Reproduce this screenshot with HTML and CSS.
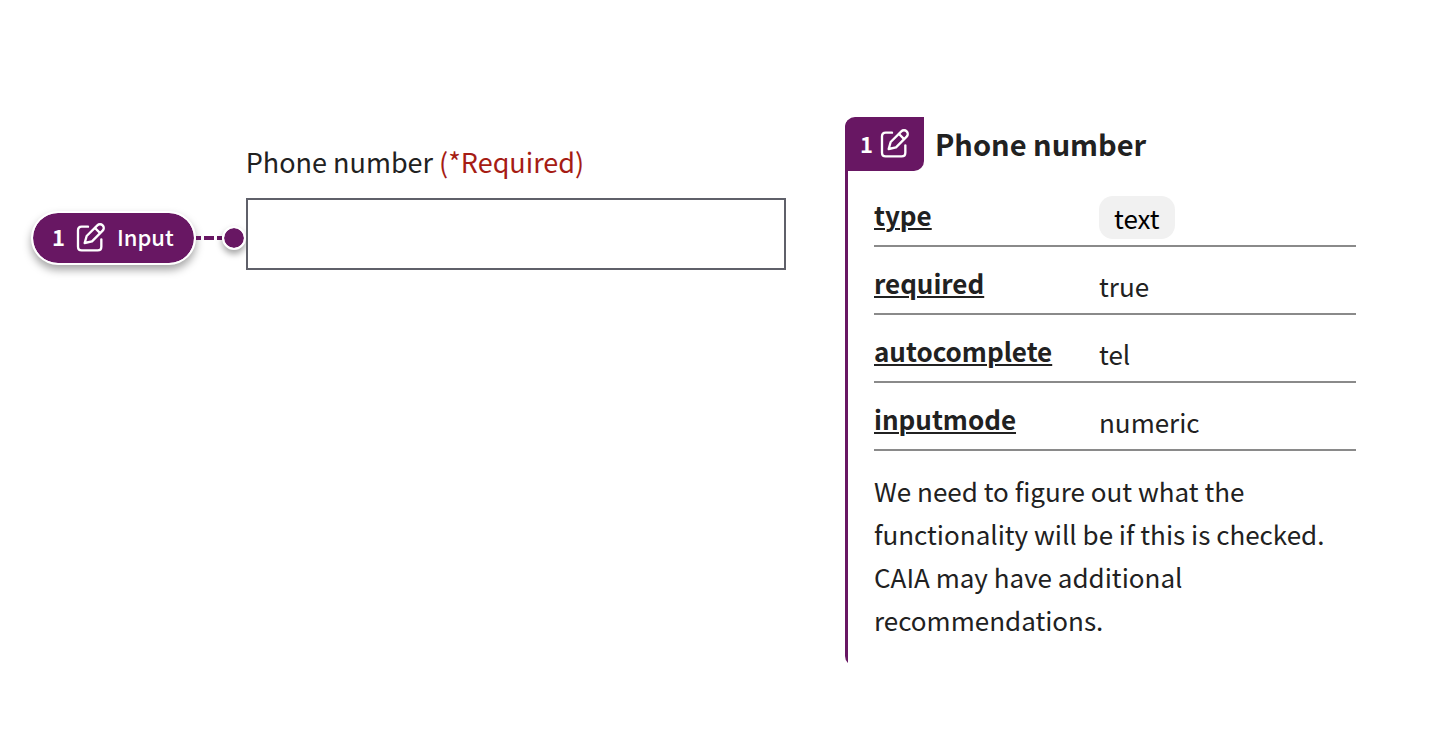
FILE: index.html
```html
<!DOCTYPE html>
<html lang="en">
<head>
<meta charset="utf-8">
<meta name="viewport" content="width=device-width, initial-scale=1">
<title>Phone number input annotation</title>
<link rel="stylesheet" href="styles.css">
</head>
<body>
<svg class="symbols" aria-hidden="true">
  <symbol id="edit" viewBox="0 0 90 90">
    <g fill="none" stroke="currentColor" stroke-width="7" stroke-linecap="round" stroke-linejoin="round">
      <path d="M36 14H17Q6 14 6 25V74Q6 85 17 85H65Q76 85 76 74V52"/>
      <path d="M26 63L32 42L64 10A11 11 0 0 1 80 26L48 58Z"/>
      <path d="M57 18L71 32"/>
    </g>
  </symbol>
</svg>
<main class="page">
  <form class="field">
    <label class="field-label" for="phone">Phone number <span class="required">(*Required)</span></label>
    <div class="marker">
      <div class="pill"><span class="number">1</span><svg class="icon" aria-hidden="true"><use href="#edit"/></svg><span>Input</span></div>
      <span class="line"></span>
      <span class="dot"></span>
    </div>
    <input class="field-input" id="phone" type="text" inputmode="numeric" autocomplete="tel" required>
  </form>
  <section class="note">
    <header class="note-header">
      <div class="tag"><span class="number">1</span><svg class="icon" aria-hidden="true"><use href="#edit"/></svg></div>
      <h2 class="note-title">Phone number</h2>
    </header>
    <div class="note-body">
      <table class="attributes">
        <tr><th scope="row"><a href="#type">type</a></th><td><code class="chip">text</code></td></tr>
        <tr><th scope="row"><a href="#required">required</a></th><td>true</td></tr>
        <tr><th scope="row"><a href="#autocomplete">autocomplete</a></th><td>tel</td></tr>
        <tr><th scope="row"><a href="#inputmode">inputmode</a></th><td>numeric</td></tr>
      </table>
      <p class="remark">We need to figure out what the functionality will be if this is checked. CAIA may have additional recommendations.</p>
    </div>
  </section>
</main>
</body>
</html>
```
FILE: styles.css
```css
* { box-sizing: border-box; }

body {
  margin: 0;
  background: #fff;
  color: #212121;
  font-family: "Noto Sans CJK SC", "Noto Sans", sans-serif;
  font-size: 26px;
  line-height: 43px;
}

.symbols { position: absolute; width: 0; height: 0; }

.icon { width: 30px; height: 30px; flex: none; }

.number { font-weight: 700; }

.page {
  display: grid;
  grid-template-columns: 755fr 511fr;
  align-items: start;
  gap: 59px;
  padding: 117px 92px 72px 31px;
}

.field {
  display: grid;
  grid-template-columns: auto 1fr;
  align-items: center;
  row-gap: 15px;
  padding-top: 23px;
}

.field-label { grid-column: 2; font-size: 27px; }

.required { color: #a61c14; }

.field-input {
  width: 100%;
  height: 72px;
  padding: 0 16px;
  border: 2px solid #5f6069;
  border-radius: 0;
  background: #fff;
  font: inherit;
}

.marker { display: flex; align-items: center; padding-top: 7px; }

.pill {
  display: flex;
  align-items: center;
  gap: 11px;
  height: 54px;
  padding: 0 20px 2px 19px;
  border: 2px solid #fff;
  border-radius: 27px;
  background: #681763;
  background-clip: padding-box;
  box-shadow: 0 5px 8px rgba(0, 0, 0, 0.35);
  color: #fff;
  font-size: 22px;
  font-weight: 500;
}

.line {
  width: 26px;
  height: 4px;
  background: repeating-linear-gradient(90deg, #681763 0 5px, transparent 5px 8px, #681763 8px 18px, transparent 18px 21px);
}

.dot {
  width: 24px;
  height: 24px;
  border: 2px solid #fff;
  border-radius: 50%;
  background: #681763;
  background-clip: padding-box;
  box-shadow: 0 4px 6px rgba(0, 0, 0, 0.35);
}

.note {
  min-height: 549px;
  border-radius: 10px 0 0 10px;
  background: linear-gradient(#681763, #681763) left / 3px 100% no-repeat;
}

.note-header { display: flex; align-items: center; gap: 11px; }

.tag {
  display: flex;
  align-items: center;
  gap: 7px;
  height: 54px;
  padding: 0 14px 2px 15px;
  border-radius: 10px 0 10px 0;
  background: #681763;
  color: #fff;
  font-size: 22px;
}

.note-title { margin: 0; padding-bottom: 2px; font-size: 29px; font-weight: 700; }

.note-body { padding: 7px 0 0 29px; }

.attributes { width: 100%; border-collapse: collapse; }

.attributes th,
.attributes td {
  height: 68px;
  border-bottom: 2px solid #8a8a8a;
  text-align: left;
  vertical-align: bottom;
}

.attributes th { width: 225px; padding: 0 0 9px; font-weight: 700; }

.attributes td { padding: 0 0 6px; }

.attributes a {
  color: inherit;
  text-decoration: underline;
  text-decoration-thickness: 2px;
  text-underline-offset: 2px;
}

.chip {
  display: inline-block;
  padding: 0 15px;
  border-radius: 14px;
  background: #f1f1f1;
  color: #000;
  font-family: inherit;
  font-size: inherit;
}

.remark { margin: 18px 0; }
```
